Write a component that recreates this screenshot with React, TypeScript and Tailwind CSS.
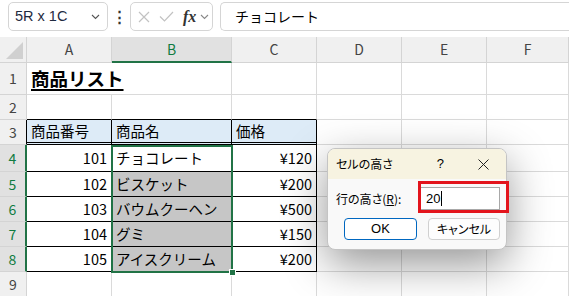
import React from 'react'

const rows = [
  ['101', 'チョコレート', '¥120'],
  ['102', 'ビスケット', '¥200'],
  ['103', 'バウムクーヘン', '¥500'],
  ['104', 'グミ', '¥150'],
  ['105', 'アイスクリーム', '¥200'],
]

const Chevron = ({ color = '#555' }: { color?: string }) => (
  <svg width="9" height="6" viewBox="0 0 9 6">
    <path d="M1 1L4.5 4.5L8 1" stroke={color} strokeWidth="1.1" fill="none" />
  </svg>
)

const App = () => {
  const colHead = 'flex items-center justify-center bg-[#f0f0f0] border-r border-b border-[#d4d4d4] text-[14px] text-[#444]'
  const rowHead = 'flex items-center justify-center bg-[#f0f0f0] border-r border-b border-[#d4d4d4] text-[14px] text-[#444]'
  const rowHeadSel = 'flex items-center justify-center bg-[#e1e1e1] border-b border-[#d4d4d4] border-r-2 border-r-[#217346] text-[14px] text-[#107c41]'
  const cell = 'flex items-center whitespace-nowrap px-[4px] border-r border-b border-[#dadada]'
  const tcell = 'flex items-center whitespace-nowrap px-[4px] border-r border-b border-black'

  return (
    <div className="relative w-[569px] h-[296px] overflow-hidden bg-white font-['Noto_Sans_CJK_JP',sans-serif] text-black">
      {/* formula bar */}
      <div className="h-[37px] flex items-start pt-[2px]">
        <div className="ml-[8px] w-[100px] h-[29px] rounded-[5px] border border-[#d5d5d5] flex items-center pl-[6px] pr-[7px]">
          <span className="font-['Liberation_Sans',sans-serif] text-[14.5px] text-[#1f2a40]">5R x 1C</span>
          <span className="ml-auto"><Chevron /></span>
        </div>
        <div className="w-[22px] h-[29px] flex items-center justify-center text-[15px] font-bold text-[#333]">⋮</div>
        <div className="w-[83px] h-[29px] rounded-[5px] border border-[#d5d5d5] flex items-center pl-[7px]">
          <svg width="12" height="12" viewBox="0 0 12 12">
            <path d="M1 1L11 11M11 1L1 11" stroke="#c2c2c2" strokeWidth="1.2" />
          </svg>
          <svg className="ml-[9px]" width="15" height="11" viewBox="0 0 15 11">
            <path d="M1 5.5L5.5 10L14 1" stroke="#c2c2c2" strokeWidth="1.2" fill="none" />
          </svg>
          <span className="ml-[9px] font-['Liberation_Serif',serif] italic font-bold text-[16px] text-[#333]">fx</span>
          <span className="ml-[4px]"><Chevron color="#888" /></span>
        </div>
        <div className="ml-[7px] flex-1 h-[29px] rounded-l-[5px] border border-r-0 border-[#d5d5d5] flex items-center pl-[14px] text-[14px]">
          チョコレート
        </div>
      </div>

      {/* sheet */}
      <div className="relative grid grid-cols-[27px_85px_120px_85px_85px_85px_82px] grid-rows-[26px_32px_25px_25px_27px_25px_25px_25px_25px_25px]">
        {/* header row */}
        <div className="relative bg-[#f0f0f0] border-r border-b border-[#d4d4d4]">
          <svg className="absolute right-[3px] bottom-[3px]" width="17" height="17" viewBox="0 0 17 17">
            <path d="M17 0L17 17L0 17Z" fill="#d0d0d0" />
          </svg>
        </div>
        <div className={colHead}>A</div>
        <div className="flex items-center justify-center bg-[#e1e1e1] border-r border-[#d4d4d4] border-b-2 border-b-[#217346] text-[14px] text-[#107c41]">B</div>
        <div className={colHead}>C</div>
        <div className={colHead}>D</div>
        <div className={colHead}>E</div>
        <div className={colHead}>F</div>

        {/* row 1 */}
        <div className={rowHead}>1</div>
        <div className="flex items-center whitespace-nowrap px-[4px] border-b border-[#dadada] overflow-visible">
          <span className="text-[18.5px] font-bold underline underline-offset-[3px] decoration-[1.5px]">商品リスト</span>
        </div>
        <div className={cell}></div>
        <div className={cell}></div>
        <div className={cell}></div>
        <div className={cell}></div>
        <div className={cell}></div>

        {/* row 2 */}
        <div className={rowHead}>2</div>
        <div className="border-r border-[#dadada] border-b border-b-black"></div>
        <div className="border-r border-[#dadada] border-b border-b-black"></div>
        <div className="border-r border-[#dadada] border-b border-b-black"></div>
        <div className={cell}></div>
        <div className={cell}></div>
        <div className={cell}></div>

        {/* row 3 */}
        <div className="flex items-center justify-center bg-[#f0f0f0] border-b border-[#d4d4d4] border-r border-r-black text-[14px] text-[#444]">3</div>
        <div className="flex items-center whitespace-nowrap px-[4px] bg-[#ddebf7] border-r border-black border-b-[3px] border-double text-[14.5px]">商品番号</div>
        <div className="flex items-center whitespace-nowrap px-[4px] bg-[#ddebf7] border-r border-black border-b-[3px] border-double text-[14.5px]">商品名</div>
        <div className="flex items-center whitespace-nowrap px-[4px] bg-[#ddebf7] border-r border-black border-b-[3px] border-double text-[14.5px]">価格</div>
        <div className={cell}></div>
        <div className={cell}></div>
        <div className={cell}></div>

        {/* rows 4-8 */}
        {rows.map((r, i) => (
          <React.Fragment key={r[0]}>
            <div className={rowHeadSel}>{i + 4}</div>
            <div className={`${tcell} justify-end text-[14.5px]`}>{r[0]}</div>
            <div className={`${tcell} text-[14.5px] ${i > 0 ? 'bg-[#c6c6c6]' : ''}`}>{r[1]}</div>
            <div className={`${tcell} justify-end text-[14.5px]`}>{r[2]}</div>
            <div className={cell}></div>
            <div className={cell}></div>
            <div className={cell}></div>
          </React.Fragment>
        ))}

        {/* row 9 */}
        <div className={rowHead}>9</div>
        <div className={cell}></div>
        <div className={cell}></div>
        <div className={cell}></div>
        <div className={cell}></div>
        <div className={cell}></div>
        <div className={cell}></div>

        {/* selection B4:B8 */}
        <div className="absolute left-[111px] top-[108px] w-[122px] h-[128px] border-2 border-[#217346] pointer-events-none">
          <div className="absolute right-[-5px] bottom-[-5px] w-[7px] h-[7px] bg-[#217346] border border-white"></div>
        </div>
      </div>

      {/* dialog */}
      <div className="absolute left-[327px] top-[148px] w-[180px] h-[102px] rounded-[8px] border border-[#c4c4c4] bg-[#f9f9f9] shadow-[0_14px_44px_rgba(0,0,0,0.42)] overflow-hidden flex flex-col text-[12px] [font-feature-settings:'palt']">
        <div className="h-[30px] shrink-0 bg-[#f7f3e1] flex items-center pl-[8px] pr-[17px]">
          <span>セルの高さ</span>
          <span className="ml-auto mr-[34px] font-['Liberation_Sans',sans-serif] text-[13px]">?</span>
          <svg width="11" height="11" viewBox="0 0 11 11">
            <path d="M0.5 0.5L10.5 10.5M10.5 0.5L0.5 10.5" stroke="#222" strokeWidth="1" />
          </svg>
        </div>
        <div className="flex items-center pl-[8px] pt-[8px]">
          <span>行の高さ(<span className="underline">R</span>):</span>
          <div className="ml-auto mr-[6px] w-[80px] h-[23px] bg-white border border-[#a8a8a8] flex items-center pl-[5px] font-['Liberation_Sans',sans-serif] text-[13px]">
            20<span className="ml-[1px] w-[1px] h-[15px] bg-black"></span>
          </div>
        </div>
        <div className="flex pl-[16px] pt-[8px] gap-[11px]">
          <div className="w-[73px] h-[22px] rounded-[4px] border border-[#0067c0] bg-white flex items-center justify-center font-['Liberation_Sans',sans-serif] text-[13px]">OK</div>
          <div className="w-[72px] h-[22px] rounded-[4px] border border-[#d0d0d0] bg-[#fdfdfd] flex items-center justify-center">キャンセル</div>
        </div>
      </div>

      {/* highlight */}
      <div className="absolute left-[418px] top-[181px] w-[91px] h-[32px] border-[3px] border-[#e3141c]"></div>
    </div>
  )
}

export default App
